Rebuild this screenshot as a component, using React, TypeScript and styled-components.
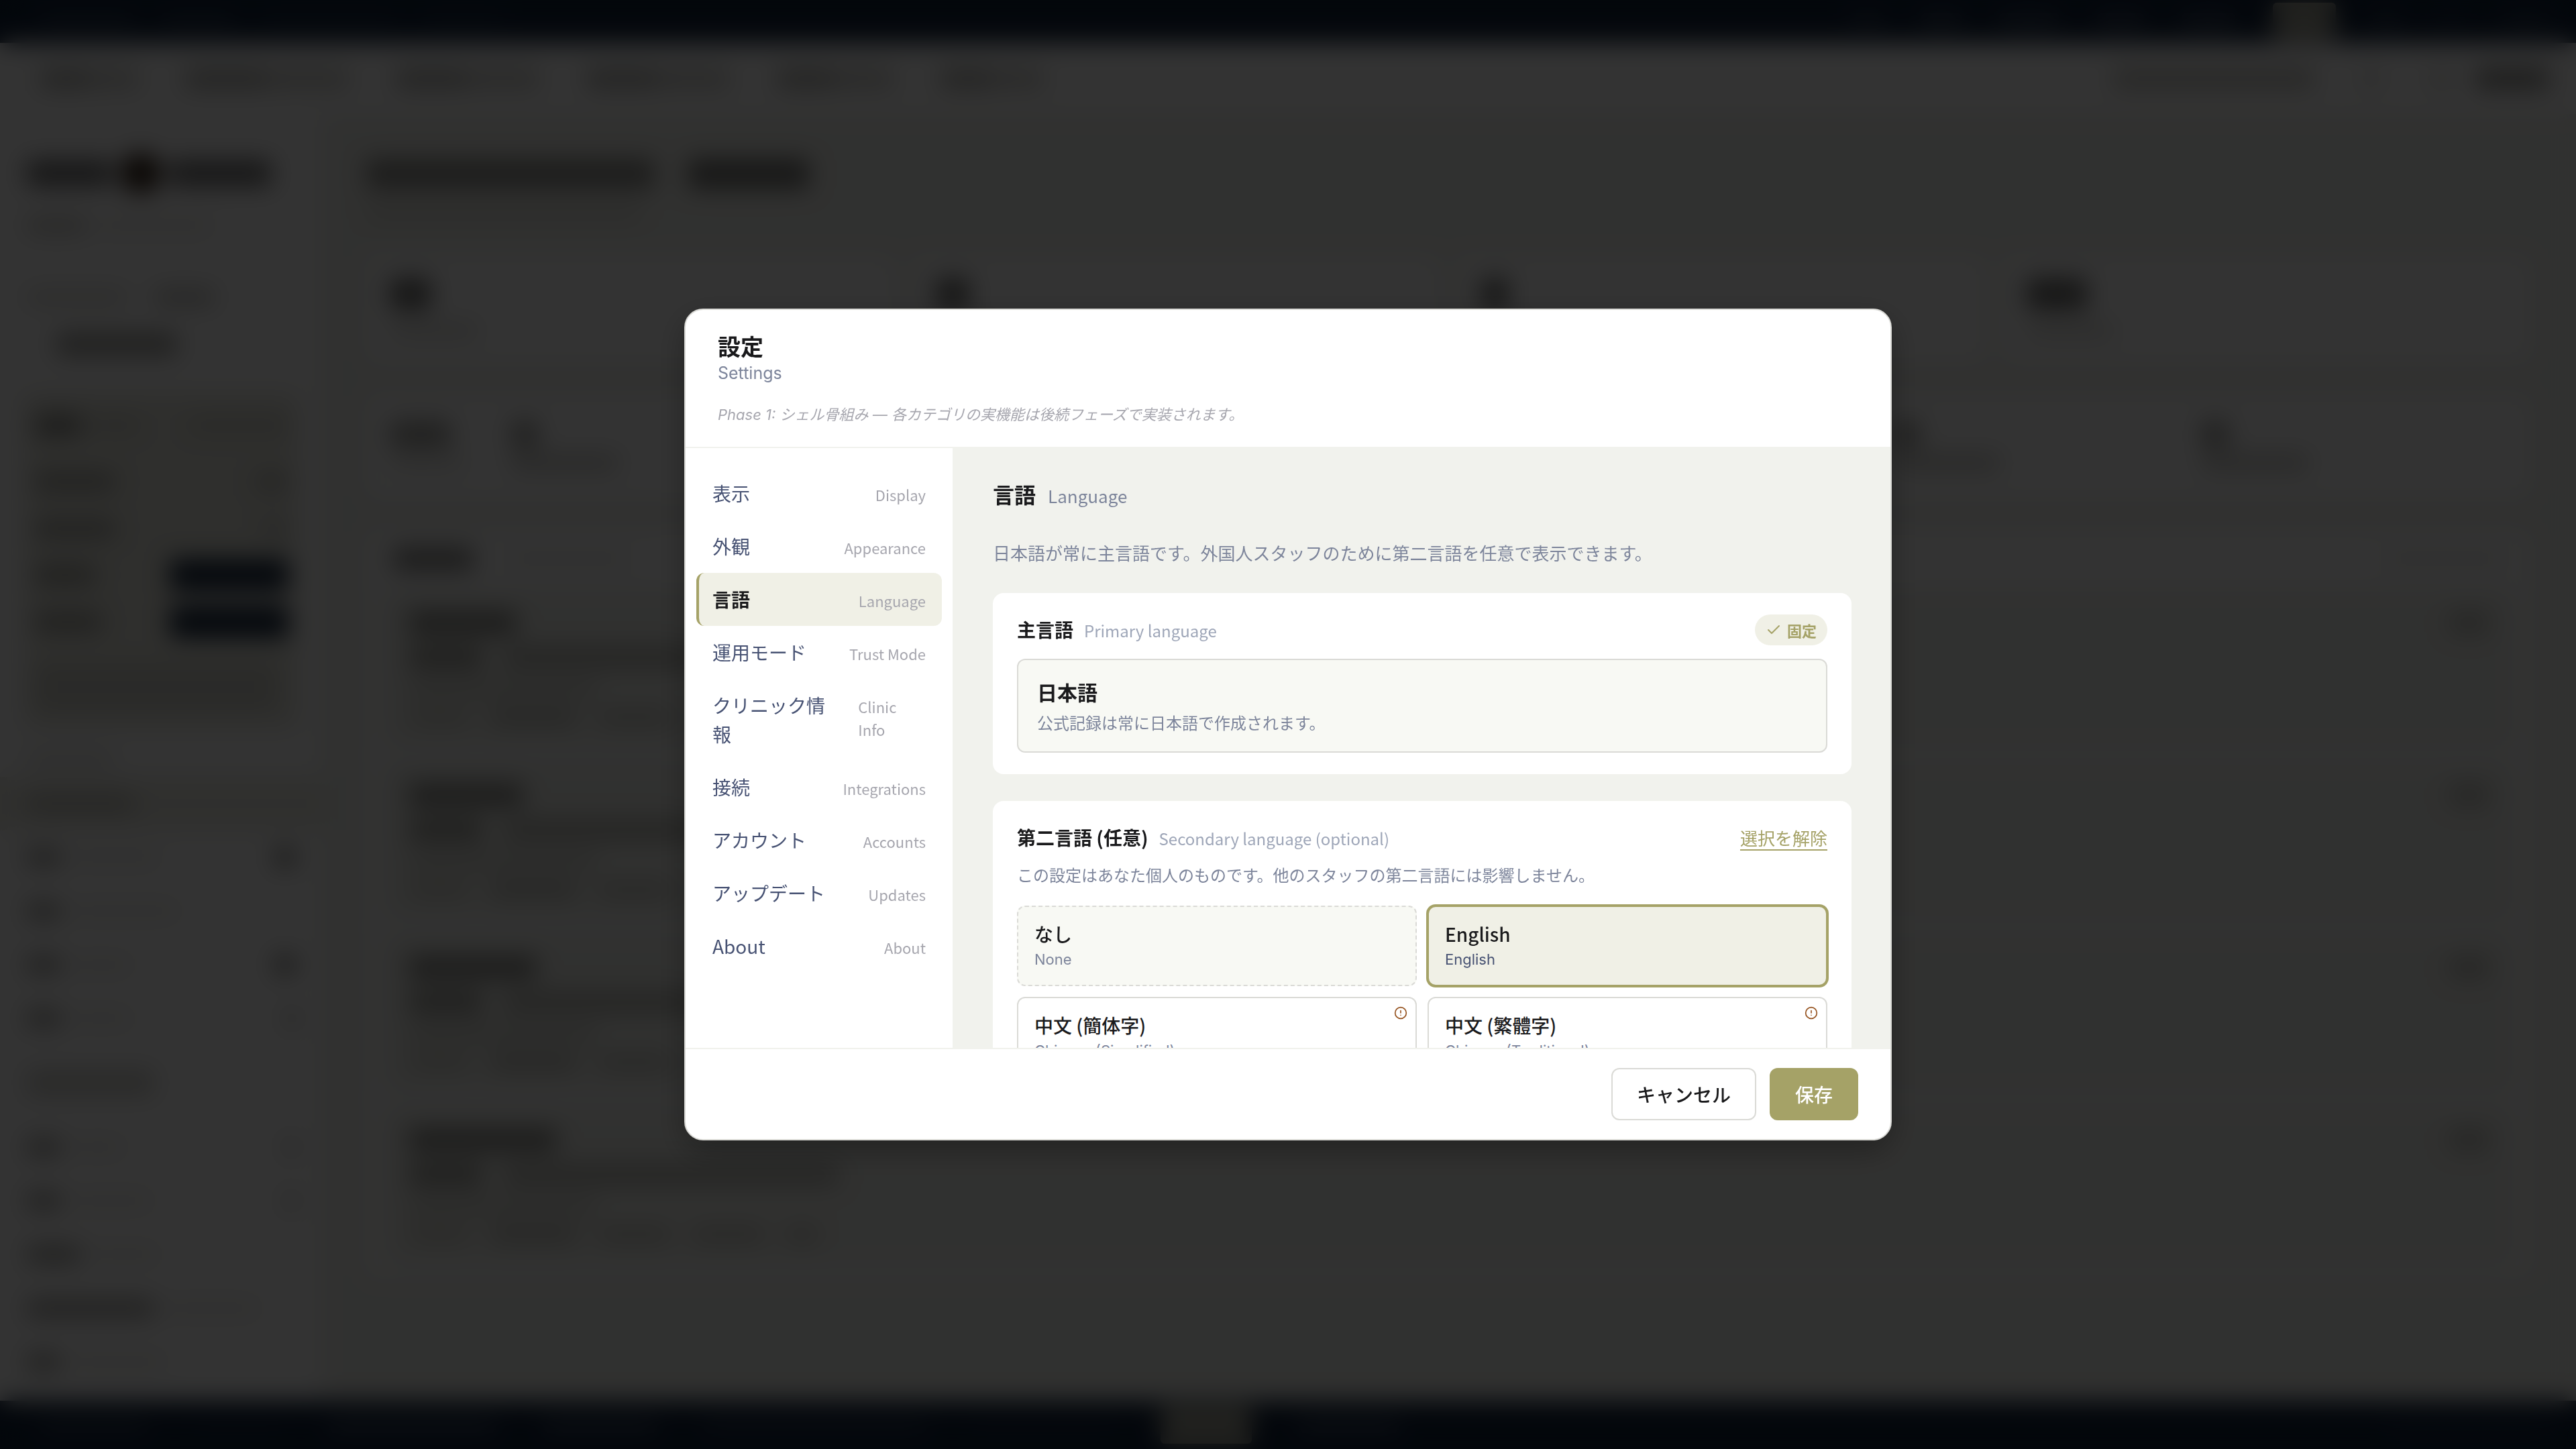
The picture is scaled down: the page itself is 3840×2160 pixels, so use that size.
import React, { useState } from "react";
import styled, { createGlobalStyle, css } from "styled-components";
import { Check, CircleAlert } from "lucide-react";

const jp = `"Noto Sans CJK JP", sans-serif`;
const inter = `Inter, "Noto Sans CJK JP", sans-serif`;

const color = {
  ink: "#1a1a1c",
  navy: "#12233b",
  text: "#475273",
  muted: "#7d859b",
  soft: "#9ea6b8",
  faint: "#a6a6ae",
  olive: "#a5a267",
  oliveSoft: "#f0f0e6",
  paper: "#f1f2ed",
  panel: "#f8f9f4",
  line: "#dadad6",
  amber: "#94501c",
};

const Global = createGlobalStyle`
  *, *::before, *::after { box-sizing: border-box; }
  body { margin: 0; font-family: ${jp}; color: ${color.ink}; background: ${color.paper}; }
  button { font: inherit; color: inherit; cursor: pointer; }
  h1, h2, h3, p { margin: 0; font-weight: inherit; font-size: inherit; }
`;

/* ---------- dashboard behind the dialog ---------- */

const Shell = styled.div`
  display: grid;
  grid-template-rows: 64px 106px 1fr 72px;
  height: 100vh;
  overflow: hidden;
  background: ${color.paper};
`;

const Strip = styled.div<{ $dark?: boolean }>`
  display: flex;
  align-items: center;
  justify-content: space-between;
  padding: 0 40px 0 60px;
  background: ${(p) => (p.$dark ? color.navy : "#fff")};
`;

const Line = styled.div<{ $gap?: number }>`
  display: flex;
  align-items: center;
  gap: ${(p) => p.$gap ?? 16}px;
`;

const Bar = styled.i<{ $w: number; $h?: number; $c?: string; $r?: number }>`
  flex: none;
  display: block;
  width: ${(p) => p.$w}px;
  height: ${(p) => p.$h ?? 24}px;
  border-radius: ${(p) => p.$r ?? 6}px;
  background: ${(p) => p.$c ?? "#c4c4c0"};
`;

const Columns = styled.div`
  display: grid;
  grid-template-columns: 480px 1fr;
  min-height: 0;
`;

const Side = styled.div`
  padding: 62px 0 0;
  background: #fff;
  overflow: hidden;
`;

const SideRow = styled.div<{ $h: number; $active?: boolean; $inset?: number }>`
  display: flex;
  align-items: center;
  justify-content: space-between;
  height: ${(p) => p.$h}px;
  padding: 0 ${(p) => p.$inset ?? 40}px;
  background: ${(p) => (p.$active ? "#ecece4" : "transparent")};
`;

const SidePanel = styled.div`
  margin: 58px 36px 18px;
  padding: 0 14px 0 16px;
  border-radius: 12px;
  background: #e8e8df;
`;

const Main = styled.div`
  display: flex;
  flex-direction: column;
  gap: 48px;
  padding: 66px 66px 0;
  overflow: hidden;
`;

const Heading = styled.div`
  display: grid;
  gap: 22px;
  height: 96px;
`;

const Stats = styled.div`
  display: grid;
  grid-template-columns: repeat(4, 1fr);
  gap: 24px;
`;

const Stat = styled.div`
  display: grid;
  align-content: center;
  gap: 20px;
  height: 160px;
  padding: 0 36px;
  border-radius: 12px;
  background: #fff;
`;

const Summary = styled(Stat)`
  grid-template-columns: 160px 2040px 440px 1fr;
  height: 154px;
`;

const Figure = styled.div`
  display: grid;
  gap: 10px;
`;

const Board = styled.div`
  padding: 0 24px;
  border-radius: 12px;
  background: #fff;
`;

const Task = styled.div`
  display: grid;
  align-content: center;
  gap: 18px;
  height: 240px;
  margin-bottom: 17px;
  padding: 0 40px;
  border-radius: 12px;
  background: ${color.paper};
`;

const SIDE_ITEMS = [
  [50, 130, 30], [50, 160, 0], [50, 90, 30], [50, 90, 10],
];
const SIDE_ITEMS_2 = [
  [50, 80, 12], [50, 120, 12], [80, 100, 0], [190, 140, 0], [50, 140, 0],
];
const TASKS = [[160, 420], [170, 380], [190, 460], [220, 500]];

function Dashboard() {
  const grey = "#dcdcd8";
  const dark = "#8d8d8a";
  return (
    <Shell aria-hidden="true">
      <Strip $dark>
        <Line $gap={40}>
          <Bar $w={140} $c="#26364c" />
          <Bar $w={110} $c="#26364c" />
          <Bar $w={200} $c="#1c2d44" />
          <Bar $w={120} $c="#1c2d44" />
        </Line>
        <Line $gap={56}>
          <Bar $w={50} $c="#2b3a4f" />
          <Bar $w={60} $c="#35445a" />
          <Bar $w={90} $c="#35445a" />
          <Bar $w={70} $c="#35445a" />
          <Bar $w={80} $c="#35445a" />
          <Bar $w={94} $h={56} $c="#a9a99b" />
          <Bar $w={40} $c="#2b3a4f" />
          <Bar $w={40} $c="#1c2d44" />
          <Bar $w={70} $c="#26364c" />
        </Line>
      </Strip>
      <Strip>
        <Line $gap={70}>
          {[146, 244, 214, 214, 174, 154].map((w, i) => (
            <Line key={i} $gap={0}>
              <Bar $w={w / 2} $h={30} $c="#b4b4b0" />
              <Bar $w={w / 2} $h={30} $c="#cfcfcb" />
            </Line>
          ))}
        </Line>
        <Line $gap={70}>
          <Bar $w={300} $h={30} $c="#c6c6c0" />
          <Bar $w={30} $c={grey} />
          <Line $gap={30}>
            <Bar $w={40} $c={grey} />
            <Bar $w={110} $h={30} $c={dark} />
          </Line>
        </Line>
      </Strip>
      <Columns>
        <Side>
          <SideRow $h={52}>
            <Line $gap={12}>
              <Bar $w={128} $h={38} $c="#6f6f70" />
              <Bar $w={60} $h={60} $r={30} $c="#2e1e12" />
              <Bar $w={152} $h={38} $c="#6f6f70" />
            </Line>
          </SideRow>
          <SideRow $h={104}>
            <Line><Bar $w={90} $c="#c8c8c4" /><Bar $w={170} $c="#ecece8" /></Line>
          </SideRow>
          <SideRow $h={110}>
            <Line $gap={40}><Bar $w={150} $c={grey} /><Bar $w={90} $c="#c0c0bc" /></Line>
          </SideRow>
          <SideRow $h={30} $inset={84}><Bar $w={180} $h={34} $c="#a0a09c" /></SideRow>
          <SidePanel>
            <SideRow $h={96} $inset={0}><Line><Bar $w={70} $h={30} $c={dark} /><Bar $w={70} $c="#cfcfc6" /></Line><Bar $w={150} $c="#cfcfc6" /></SideRow>
            <SideRow $h={72} $inset={0}><Bar $w={120} $h={28} $c="#a8a8a2" /><Bar $w={50} $c="#b8b8b2" /></SideRow>
            <SideRow $h={68} $inset={0}><Bar $w={120} $h={28} $c="#a8a8a2" /><Bar $w={40} $c="#c8c8c2" /></SideRow>
            <SideRow $h={70} $inset={0}><Bar $w={90} $h={28} $c="#a0a09a" /><Bar $w={176} $h={46} $c={color.navy} /></SideRow>
            <SideRow $h={70} $inset={0}><Bar $w={100} $h={28} $c="#a0a09a" /><Bar $w={176} $h={46} $c={color.navy} /></SideRow>
            <SideRow $h={124} $inset={0}><Bar $w={360} $h={70} $c="#d2d2c9" /></SideRow>
          </SidePanel>
          <SideRow $h={54}><Bar $w={130} $c="#e4e4e0" /></SideRow>
          <SideRow $h={80} $active><Bar $w={160} $h={28} $c="#c0c0b8" /></SideRow>
          {SIDE_ITEMS.map(([a, b, c], i) => (
            <SideRow key={i} $h={80}>
              <Line><Bar $w={a} $h={28} $c="#a8a8a4" /><Bar $w={b} $c="#ecece8" /></Line>
              {c > 0 && <Bar $w={c} $h={30} $c="#8a8a86" />}
            </SideRow>
          ))}
          <SideRow $h={112}><Bar $w={190} $h={40} $c="#d2d2cd" /></SideRow>
          {SIDE_ITEMS_2.map(([a, b, c], i) => (
            <SideRow key={i} $h={80}>
              <Line><Bar $w={a} $h={28} $c="#a8a8a4" /><Bar $w={b} $c="#ecece8" /></Line>
              {c > 0 && <Bar $w={c} $h={30} $c="#a8a8a4" />}
            </SideRow>
          ))}
        </Side>
        <Main>
          <Heading>
            <Line $gap={50}><Bar $w={430} $h={44} $c="#8f8f8b" /><Bar $w={180} $h={44} $c="#747472" /></Line>
            <Bar $w={410} $h={28} $c="#dcdcd6" />
          </Heading>
          <Stats>
            {[60, 50, 40, 90].map((w, i) => (
              <Stat key={i}><Bar $w={w} $h={46} $c="#6e6e6c" /><Bar $w={130} $c={grey} /></Stat>
            ))}
          </Stats>
          <Summary>
            {[90, 40, 40, 40].map((w, i) => (
              <Figure key={i}>
                <Bar $w={w} $h={40} $c="#a4a4a0" />
                <Bar $w={i ? 160 : 110} $h={26} $c={i ? "#cdcdc9" : "#e8e8e4"} />
              </Figure>
            ))}
          </Summary>
          <Board>
            <SideRow $h={86} $inset={16}>
              <Line $gap={50}><Bar $w={120} $h={34} $c="#8a8a88" /><Bar $w={180} $c="#ececea" /></Line>
              <Bar $w={180} $c="#ececea" />
            </SideRow>
            {TASKS.map(([a, b], i) => (
              <Task key={i}>
                <SideRow $h={34} $inset={0}><Bar $w={a} $h={34} $c="#8c8c88" /><Bar $w={60} $h={34} $c="#c4c4be" /></SideRow>
                <Line $gap={30}><Bar $w={110} $h={34} $c="#a0a09a" /><Bar $w={b} $h={34} $c="#bcbcb6" /></Line>
                <Bar $w={280} $c="#d0d0ca" />
                <Line $gap={30}><Bar $w={90} $c="#d0d0c8" /><Bar $w={130} $c="#bebeb8" /><Bar $w={110} $c="#c8c8c2" /><Bar $w={110} $c="#c8c8c2" /><Bar $w={50} $c="#c8c8c2" /></Line>
              </Task>
            ))}
          </Board>
        </Main>
      </Columns>
      <Strip $dark>
        <Line $gap={70}>
          <Bar $w={160} $c="#2b3a4f" /><Bar $w={130} $c="#16283f" /><Bar $w={250} $c="#35445a" /><Bar $w={170} $c="#35445a" /><Bar $w={330} $c="#26364c" /><Bar $w={210} $c="#16283f" /><Bar $w={136} $h={56} $c="#a9a99b" /><Bar $w={150} $c="#35445a" />
        </Line>
        <Bar $w={240} $c="#1c2d44" />
      </Strip>
    </Shell>
  );
}

/* ---------- dialog ---------- */

const Overlay = styled.div`
  position: fixed;
  inset: 0;
  display: grid;
  place-items: center;
  background: rgba(0, 0, 0, 0.8);
  backdrop-filter: blur(18px);
`;

const Dialog = styled.div`
  display: grid;
  grid-template-rows: auto 1fr auto;
  width: min(1800px, 94vw);
  height: min(1240px, 90vh);
  overflow: hidden;
  border: 2px solid ${color.line};
  border-radius: 28px;
  background: #fff;
  box-shadow: 0 16px 48px rgba(0, 0, 0, 0.3);
`;

const Header = styled.header`
  padding: 30px 48px;
  border-bottom: 2px solid ${color.paper};
`;

const Title = styled.h1`
  font-size: 34px;
  line-height: 48px;
  font-weight: 700;
`;

const Subtitle = styled.p`
  font: 25px/32px ${inter};
  color: ${color.muted};
`;

const Note = styled.p`
  margin-top: 28px;
  font: italic 22px/36px ${inter};
  color: ${color.faint};
`;

const Body = styled.div`
  display: grid;
  grid-template-columns: 400px 1fr;
  min-height: 0;
`;

const Nav = styled.nav`
  padding: 28px 16px;
  border-right: 2px solid ${color.paper};
`;

const NavItem = styled.button<{ $active: boolean }>`
  display: flex;
  align-items: baseline;
  justify-content: space-between;
  gap: 24px;
  width: 100%;
  padding: 18px 24px 18px 20px;
  border: 0;
  border-left: 4px solid ${(p) => (p.$active ? color.olive : "transparent")};
  border-radius: 12px;
  background: ${(p) => (p.$active ? color.oliveSoft : "transparent")};
  color: ${(p) => (p.$active ? color.ink : color.text)};
  font-size: 28px;
  line-height: 43px;
  font-weight: ${(p) => (p.$active ? 700 : 400)};
  text-align: left;
`;

const NavHint = styled.span`
  font-size: 22px;
  line-height: 34px;
  font-weight: 400;
  color: ${color.faint};
`;

const Content = styled.main`
  padding: 42px 56px;
  overflow: hidden;
  background: ${color.paper};
`;

const Inner = styled.div`
  max-width: 1280px;
  margin: 0 auto;
`;

const PageTitle = styled.h2`
  display: flex;
  align-items: baseline;
  gap: 18px;
  font-size: 32px;
  line-height: 52px;
  font-weight: 700;

  small {
    font-size: 26px;
    line-height: 40px;
    font-weight: 400;
    color: ${color.muted};
  }
`;

const Lead = styled.p`
  margin: 42px 0 40px;
  font-size: 26px;
  line-height: 40px;
  color: ${color.muted};
`;

const Card = styled.section`
  margin-bottom: 40px;
  padding: 32px 36px;
  border-radius: 16px;
  background: #fff;
`;

const CardHead = styled.div`
  display: flex;
  align-items: center;
  justify-content: space-between;
  height: 46px;
`;

const CardTitle = styled.h3`
  display: flex;
  align-items: baseline;
  gap: 16px;
  font-size: 28px;
  line-height: 44px;
  font-weight: 700;

  small {
    font-size: 24px;
    font-weight: 400;
    color: ${color.soft};
  }
`;

const Badge = styled.span`
  display: flex;
  align-items: center;
  gap: 8px;
  height: 46px;
  padding: 0 16px;
  border-radius: 23px;
  background: ${color.oliveSoft};
  color: ${color.olive};
  font-size: 22px;
  font-weight: 700;
`;

const Locked = styled.div`
  margin-top: 20px;
  padding: 24px 28px;
  border: 2px solid ${color.line};
  border-radius: 12px;
  background: ${color.panel};
`;

const LockedName = styled.p`
  font-size: 30px;
  line-height: 46px;
  font-weight: 700;
`;

const LockedText = styled.p`
  margin-top: 4px;
  font-size: 24px;
  line-height: 38px;
  color: ${color.muted};
`;

const ClearButton = styled.button`
  padding: 0;
  border: 0;
  background: none;
  color: ${color.olive};
  font-size: 26px;
  line-height: 44px;
  text-decoration: underline;
  text-decoration-thickness: 2px;
  text-underline-offset: 6px;
`;

const CardText = styled.p`
  margin: 12px 0 26px;
  font-size: 24px;
  line-height: 40px;
  color: ${color.muted};
`;

const Options = styled.div`
  display: grid;
  grid-template-columns: 1fr 1fr;
  gap: 16px;
`;

const OptionCard = styled.button<{ $dashed?: boolean; $selected: boolean }>`
  position: relative;
  display: grid;
  height: 120px;
  padding: 20px 24px;
  border: 2px ${(p) => (p.$dashed ? "dashed" : "solid")} ${color.line};
  border-radius: 12px;
  background: ${(p) => (p.$dashed ? color.panel : "#fff")};
  text-align: left;
  ${(p) =>
    p.$selected &&
    css`
      border: 2px solid ${color.olive};
      box-shadow: 0 0 0 2px ${color.olive};
      background: ${color.oliveSoft};
    `}
`;

const OptionName = styled.span`
  font-size: 28px;
  line-height: 40px;
  font-weight: 500;
`;

const OptionHint = styled.span<{ $selected: boolean }>`
  font: 22px/36px ${inter};
  color: ${(p) => (p.$selected ? color.text : color.muted)};
`;

const Warning = styled(CircleAlert)`
  position: absolute;
  top: 12px;
  right: 12px;
  color: ${color.amber};
`;

const Footer = styled.footer`
  display: flex;
  justify-content: flex-end;
  gap: 20px;
  padding: 28px 48px;
  border-top: 2px solid ${color.paper};
`;

const Action = styled.button<{ $primary?: boolean }>`
  height: 78px;
  padding: 0 36px;
  border: 2px solid ${(p) => (p.$primary ? color.olive : color.line)};
  border-radius: 12px;
  background: ${(p) => (p.$primary ? color.olive : "#fff")};
  color: ${(p) => (p.$primary ? "#fff" : color.ink)};
  font-size: 28px;
  line-height: 40px;
  font-weight: 500;
`;

const NAV = [
  ["表示", "Display"],
  ["外観", "Appearance"],
  ["言語", "Language"],
  ["運用モード", "Trust Mode"],
  ["クリニック情報", "Clinic Info"],
  ["接続", "Integrations"],
  ["アカウント", "Accounts"],
  ["アップデート", "Updates"],
  ["About", "About"],
];

const LANGUAGES = [
  { name: "なし", hint: "None", none: true },
  { name: "English", hint: "English" },
  { name: "中文 (簡体字)", hint: "Chinese (Simplified)", warn: true },
  { name: "中文 (繁體字)", hint: "Chinese (Traditional)", warn: true },
];

export default function App() {
  const [section, setSection] = useState("言語");
  const [second, setSecond] = useState("English");

  return (
    <>
      <Global />
      <Dashboard />
      <Overlay>
        <Dialog role="dialog" aria-modal="true" aria-labelledby="settings-title">
          <Header>
            <Title id="settings-title">設定</Title>
            <Subtitle>Settings</Subtitle>
            <Note>Phase 1: シェル骨組み — 各カテゴリの実機能は後続フェーズで実装されます。</Note>
          </Header>
          <Body>
            <Nav>
              {NAV.map(([name, hint]) => (
                <NavItem key={name} type="button" $active={name === section} onClick={() => setSection(name)}>
                  <span>{name}</span>
                  <NavHint>{hint}</NavHint>
                </NavItem>
              ))}
            </Nav>
            <Content>
              <Inner>
                <PageTitle>
                  言語 <small>Language</small>
                </PageTitle>
                <Lead>日本語が常に主言語です。外国人スタッフのために第二言語を任意で表示できます。</Lead>
                <Card>
                  <CardHead>
                    <CardTitle>
                      主言語 <small>Primary language</small>
                    </CardTitle>
                    <Badge>
                      <Check size={24} strokeWidth={2} />
                      固定
                    </Badge>
                  </CardHead>
                  <Locked>
                    <LockedName>日本語</LockedName>
                    <LockedText>公式記録は常に日本語で作成されます。</LockedText>
                  </Locked>
                </Card>
                <Card>
                  <CardHead>
                    <CardTitle>
                      第二言語 (任意) <small>Secondary language (optional)</small>
                    </CardTitle>
                    <ClearButton type="button" onClick={() => setSecond("なし")}>
                      選択を解除
                    </ClearButton>
                  </CardHead>
                  <CardText>この設定はあなた個人のものです。他のスタッフの第二言語には影響しません。</CardText>
                  <Options>
                    {LANGUAGES.map((l) => (
                      <OptionCard
                        key={l.name}
                        type="button"
                        $dashed={l.none}
                        $selected={l.name === second}
                        aria-pressed={l.name === second}
                        onClick={() => setSecond(l.name)}
                      >
                        <OptionName>{l.name}</OptionName>
                        <OptionHint $selected={l.name === second}>{l.hint}</OptionHint>
                        {l.warn && <Warning size={20} strokeWidth={2} />}
                      </OptionCard>
                    ))}
                  </Options>
                </Card>
              </Inner>
            </Content>
          </Body>
          <Footer>
            <Action type="button">キャンセル</Action>
            <Action type="button" $primary>
              保存
            </Action>
          </Footer>
        </Dialog>
      </Overlay>
    </>
  );
}
